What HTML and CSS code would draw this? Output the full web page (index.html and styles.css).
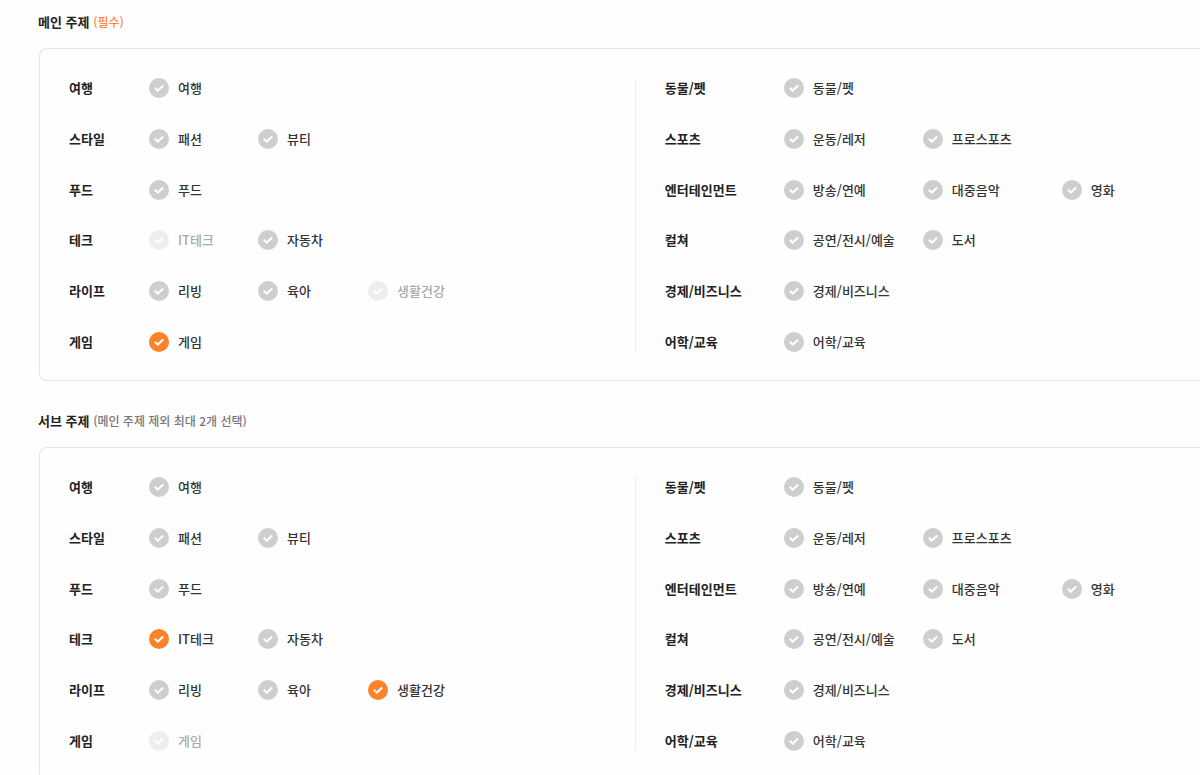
FILE: index.html
```
<!DOCTYPE html>
<html lang="ko">
<head>
<meta charset="utf-8">
<meta name="viewport" content="width=device-width, initial-scale=1">
<title>주제 선택</title>
<link rel="stylesheet" href="styles.css">
</head>
<body>
<form class="topics">
  <section class="topic-section" aria-labelledby="main-title">
    <h2 class="title" id="main-title">메인 주제 <span class="note required">(필수)</span></h2>
    <div class="card">
      <div class="half">
        <div class="row"><h3 class="name">여행</h3><div class="options"><label class="option"><input type="radio" name="main">여행</label></div></div>
        <div class="row"><h3 class="name">스타일</h3><div class="options"><label class="option"><input type="radio" name="main">패션</label><label class="option"><input type="radio" name="main">뷰티</label></div></div>
        <div class="row"><h3 class="name">푸드</h3><div class="options"><label class="option"><input type="radio" name="main">푸드</label></div></div>
        <div class="row"><h3 class="name">테크</h3><div class="options"><label class="option"><input type="radio" name="main" disabled>IT테크</label><label class="option"><input type="radio" name="main">자동차</label></div></div>
        <div class="row"><h3 class="name">라이프</h3><div class="options"><label class="option"><input type="radio" name="main">리빙</label><label class="option"><input type="radio" name="main">육아</label><label class="option"><input type="radio" name="main" disabled>생활건강</label></div></div>
        <div class="row"><h3 class="name">게임</h3><div class="options"><label class="option"><input type="radio" name="main" checked>게임</label></div></div>
      </div>
      <div class="half wide">
        <div class="row"><h3 class="name">동물/펫</h3><div class="options"><label class="option"><input type="radio" name="main">동물/펫</label></div></div>
        <div class="row"><h3 class="name">스포츠</h3><div class="options"><label class="option"><input type="radio" name="main">운동/레저</label><label class="option"><input type="radio" name="main">프로스포츠</label></div></div>
        <div class="row"><h3 class="name">엔터테인먼트</h3><div class="options"><label class="option"><input type="radio" name="main">방송/연예</label><label class="option"><input type="radio" name="main">대중음악</label><label class="option"><input type="radio" name="main">영화</label></div></div>
        <div class="row"><h3 class="name">컬쳐</h3><div class="options"><label class="option"><input type="radio" name="main">공연/전시/예술</label><label class="option"><input type="radio" name="main">도서</label></div></div>
        <div class="row"><h3 class="name">경제/비즈니스</h3><div class="options"><label class="option"><input type="radio" name="main">경제/비즈니스</label></div></div>
        <div class="row"><h3 class="name">어학/교육</h3><div class="options"><label class="option"><input type="radio" name="main">어학/교육</label></div></div>
      </div>
    </div>
  </section>

  <section class="topic-section" aria-labelledby="sub-title">
    <h2 class="title" id="sub-title">서브 주제 <span class="note">(메인 주제 제외 최대 2개 선택)</span></h2>
    <div class="card">
      <div class="half">
        <div class="row"><h3 class="name">여행</h3><div class="options"><label class="option"><input type="checkbox" name="sub">여행</label></div></div>
        <div class="row"><h3 class="name">스타일</h3><div class="options"><label class="option"><input type="checkbox" name="sub">패션</label><label class="option"><input type="checkbox" name="sub">뷰티</label></div></div>
        <div class="row"><h3 class="name">푸드</h3><div class="options"><label class="option"><input type="checkbox" name="sub">푸드</label></div></div>
        <div class="row"><h3 class="name">테크</h3><div class="options"><label class="option"><input type="checkbox" name="sub" checked>IT테크</label><label class="option"><input type="checkbox" name="sub">자동차</label></div></div>
        <div class="row"><h3 class="name">라이프</h3><div class="options"><label class="option"><input type="checkbox" name="sub">리빙</label><label class="option"><input type="checkbox" name="sub">육아</label><label class="option"><input type="checkbox" name="sub" checked>생활건강</label></div></div>
        <div class="row"><h3 class="name">게임</h3><div class="options"><label class="option"><input type="checkbox" name="sub" disabled>게임</label></div></div>
      </div>
      <div class="half wide">
        <div class="row"><h3 class="name">동물/펫</h3><div class="options"><label class="option"><input type="checkbox" name="sub">동물/펫</label></div></div>
        <div class="row"><h3 class="name">스포츠</h3><div class="options"><label class="option"><input type="checkbox" name="sub">운동/레저</label><label class="option"><input type="checkbox" name="sub">프로스포츠</label></div></div>
        <div class="row"><h3 class="name">엔터테인먼트</h3><div class="options"><label class="option"><input type="checkbox" name="sub">방송/연예</label><label class="option"><input type="checkbox" name="sub">대중음악</label><label class="option"><input type="checkbox" name="sub">영화</label></div></div>
        <div class="row"><h3 class="name">컬쳐</h3><div class="options"><label class="option"><input type="checkbox" name="sub">공연/전시/예술</label><label class="option"><input type="checkbox" name="sub">도서</label></div></div>
        <div class="row"><h3 class="name">경제/비즈니스</h3><div class="options"><label class="option"><input type="checkbox" name="sub">경제/비즈니스</label></div></div>
        <div class="row"><h3 class="name">어학/교육</h3><div class="options"><label class="option"><input type="checkbox" name="sub">어학/교육</label></div></div>
      </div>
    </div>
  </section>
</form>
</body>
</html>
```
FILE: styles.css
```
* {
  box-sizing: border-box;
}

body {
  margin: 0;
  background: #fefefe;
  color: #333;
  font-family: "Noto Sans CJK KR", sans-serif;
  font-size: 13px;
  font-weight: 500;
  line-height: 20px;
}

.topics {
  display: flex;
  flex-direction: column;
  gap: 30px;
  padding: 12px 0 0 38px;
}

.title,
.name {
  margin: 0;
  color: #222;
  font-size: 13px;
  font-weight: 700;
}

.title {
  margin-bottom: 16px;
}

.note {
  color: #777;
  font-size: 12px;
  font-weight: 500;
}

.required {
  color: #ff8a3c;
}

.card {
  display: grid;
  grid-template-columns: 20fr 19fr;
  margin-left: 1px;
  padding: 29px 0 28px;
  border: 1px solid #e5e5e5;
  border-right: 0;
  border-radius: 8px 0 0 8px;
}

.half {
  display: grid;
  align-content: space-between;
  min-height: 274px;
  padding-left: 29px;
}

.wide {
  border-left: 1px solid #eee;
}

.row {
  display: grid;
  grid-template-columns: 80px 1fr;
}

.wide .row {
  grid-template-columns: 119px 1fr;
}

.name,
.option {
  white-space: nowrap;
}

.options {
  display: grid;
  grid-template-columns: 109px 110px auto;
}

.wide .options {
  grid-template-columns: 139px 139px auto;
}

.option {
  display: flex;
  align-items: center;
  gap: 9px;
  cursor: pointer;
}

.option input {
  appearance: none;
  flex: none;
  width: 20px;
  height: 20px;
  margin: 0;
  border-radius: 50%;
  background: #cecece url("data:image/svg+xml,%3Csvg xmlns='http://www.w3.org/2000/svg' viewBox='0 0 20 20'%3E%3Cpath d='M5.8 9.7l3 2.9 5.4-5' fill='none' stroke='white' stroke-width='2'/%3E%3C/svg%3E") center / 20px no-repeat;
  cursor: inherit;
}

.option input:checked {
  background-color: #ff8228;
}

.option:has(input:disabled) {
  color: #aaa;
  cursor: default;
}

.option input:disabled {
  background-color: #eee;
}
```
